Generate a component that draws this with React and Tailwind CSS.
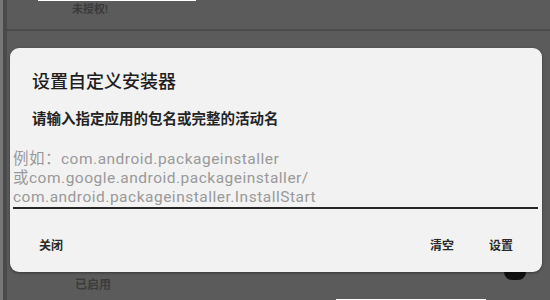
import React from 'react';

const font = { fontFamily: 'Roboto, "Noto Sans CJK SC", sans-serif' };

export default function App() {
  return (
    <div
      className="relative w-[550px] h-[300px] overflow-hidden bg-[#5b5b5b]"
      style={font}
    >
      {/* background page */}
      <div className="absolute left-0 top-0 h-full w-[3px] bg-[#777]" />
      <div className="absolute left-[3px] top-0 h-full w-[4px] bg-[#4a4a4a]" />
      <div className="absolute left-[38px] top-0 h-px w-[158px] bg-white" />
      <div className="flex flex-col">
        <div className="h-[29px] pl-[72px] pt-[2px] text-[11px] font-bold text-[#3a3a3a]">
          未授权!
        </div>
        <div className="h-[2px] bg-[#4b4b4b]" />
      </div>
      <div className="absolute left-[75px] top-[276px] text-[12px] font-bold text-[#3c3c3c]">
        已启用
      </div>
      <div className="absolute left-[504px] top-[264px] w-[22px] h-[16px] rounded-full bg-[#111]" />
      <div className="absolute left-[336px] bottom-0 h-px w-[150px] bg-white" />

      {/* dialog */}
      <div className="absolute left-[10px] top-[48px] w-[532px] h-[224px] rounded-[9px] bg-[#f2f2f2] shadow-[0_1px_3px_rgba(0,0,0,0.4)] flex flex-col">
        <div className="pl-[22px] pt-[23px] text-[18px] leading-[22px] font-medium text-[#1e1e1e]">
          设置自定义安装器
        </div>
        <div className="pl-[22px] pt-[18px] text-[14.5px] leading-[18px] font-semibold text-[#242424]">
          请输入指定应用的包名或完整的活动名
        </div>
        <div className="ml-[3px] mr-[4px] mt-[21px] border-b-2 border-[#262626] text-[15.5px] leading-[19px] tracking-[0.5px] text-[#999]">
          <div>例如：com.android.packageinstaller</div>
          <div>或com.google.android.packageinstaller/</div>
          <div>com.android.packageinstaller.InstallStart</div>
        </div>
        <div className="flex items-center pt-[29px] text-[12px] leading-[16px] font-bold text-[#2a2a2a]">
          <span className="pl-[29px]">关闭</span>
          <span className="ml-auto">清空</span>
          <span className="ml-[35px] mr-[29px]">设置</span>
        </div>
      </div>
    </div>
  );
}
